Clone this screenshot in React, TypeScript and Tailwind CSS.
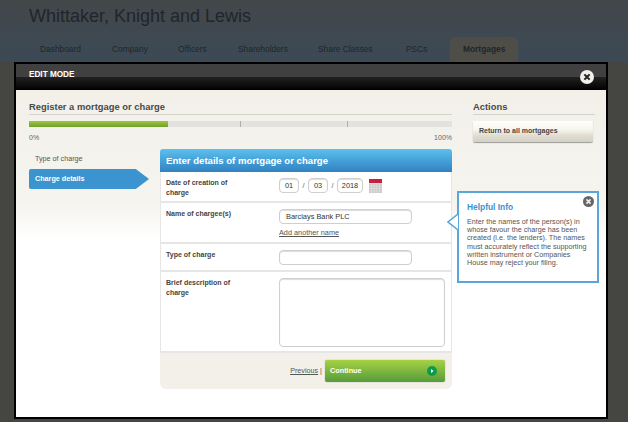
const font = "font-['Liberation_Sans',Arial,sans-serif]";

const tabs = ["Dashboard", "Company", "Officers", "Shareholders", "Share Classes", "PSCs"];

function CloseIcon({ size, bg, fg }: { size: number; bg: string; fg: string }) {
    return (
        <svg width={size} height={size} viewBox="0 0 16 16">
            <circle cx="8" cy="8" r="8" fill={bg} />
            <path d="M5 5l6 6M11 5l-6 6" stroke={fg} strokeWidth="2.4" />
        </svg>
    );
}

function CalendarIcon() {
    return (
        <svg width="13" height="14" viewBox="0 0 13 14">
            <rect width="13" height="14" fill="#c9c9c9" />
            <rect width="13" height="4" fill="#c8203c" />
            <path d="M0 4.5h13M0 7h13M0 9.5h13M0 12h13M2.6 4v10M5.2 4v10M7.8 4v10M10.4 4v10" stroke="#e4e4e4" strokeWidth="0.6" />
        </svg>
    );
}

function FieldRow({ label, className, children }: { label: string; className: string; children: React.ReactNode }) {
    return (
        <div className={`flex border-b-2 border-[#e6e6e4] pl-[5px] pt-[6px] ${className}`}>
            <div className="w-[113px] shrink-0 pr-[30px] text-[7px] leading-[10px] font-bold text-[#444]">{label}</div>
            <div>{children}</div>
        </div>
    );
}

const inputClass = "border border-[#cfcfcd] rounded-[4px] bg-white text-[7.4px] text-[#333] flex items-center shadow-[inset_0_1px_1px_#ddd]";

export default function App() {
    return (
        <div className={`relative w-[628px] h-[422px] overflow-hidden bg-[#454541] ${font}`}>
            {/* Page behind the overlay */}
            <div className="h-[62px] bg-gradient-to-b from-[#43474a] to-[#3b4a56] pl-[29px]">
                <h1 className="pt-[4px] pb-[1px] text-[18px] leading-[24px] text-[#20262a]">Whittaker, Knight and Lewis</h1>
                <div className="flex mt-[8px] ml-[-29px] pl-[28px] text-[8.4px] text-[#20262a]">
                    <span className="w-[72px] pl-[12px] pt-[6px] h-[25px]">{tabs[0]}</span>
                    <span className="w-[68px] pl-[12px] pt-[6px]">{tabs[1]}</span>
                    <span className="w-[60px] pl-[10px] pt-[6px]">{tabs[2]}</span>
                    <span className="w-[80px] pl-[10px] pt-[6px]">{tabs[3]}</span>
                    <span className="w-[84px] pl-[10px] pt-[6px]">{tabs[4]}</span>
                    <span className="w-[58px] pl-[14px] pt-[6px]">{tabs[5]}</span>
                    <span className="w-[68px] h-[25px] rounded-t-[6px] bg-[#4f4d48] pl-[13px] pt-[6px] font-bold">Mortgages</span>
                </div>
            </div>

            {/* Edit mode overlay */}
            <div className="absolute left-[14px] top-[62px] w-[594px] h-[357px] border-2 border-black flex flex-col">
                <div className="relative h-[26px] shrink-0 bg-[linear-gradient(#404040_0,#404040_50%,#222_50%,#000_100%)] pl-[13px] pt-[5px] text-[8.2px] font-bold leading-[11px] text-white">
                    EDIT MODE
                    <div className="absolute right-[12px] top-[6px] flex">
                        <CloseIcon size={14} bg="#f2f0e9" fg="#222" />
                    </div>
                </div>

                <div className="relative flex-1 flex bg-[linear-gradient(#f2f0e9_0,#f5f4ef_35%,#fff_46%)] pl-[13px] pr-[11px]">
                    <div className="w-[423px] shrink-0">
                        <h2 className="h-[25px] pt-[10px] border-b border-[#d5d3cc] text-[9.4px] leading-[14px] font-bold text-[#4a4a46]">Register a mortgage or charge</h2>
                        <div className="relative mt-[6px] h-[6px] bg-[#e3e2de]">
                            <div className="h-full w-[139px] bg-gradient-to-b from-[#9cc642] to-[#72a02c]" />
                            <div className="absolute left-[211px] top-0 h-full w-px bg-[#b0afa9]" />
                            <div className="absolute left-[318px] top-0 h-full w-px bg-[#b0afa9]" />
                        </div>
                        <div className="flex justify-between mt-[6px] text-[7px] leading-[9px] text-[#666]">
                            <span>0%</span>
                            <span>100%</span>
                        </div>

                        <div className="flex mt-[7px]">
                            <div className="w-[131px] shrink-0">
                                <div className="pl-[6px] pt-[5px] h-[20px] text-[7.2px] leading-[10px] text-[#555]">Type of charge</div>
                                <div className="h-[20px] w-[120px] rounded-l-[2px] bg-[#3b93d0] pl-[6px] pt-[5px] text-[7.2px] leading-[10px] font-bold text-white [clip-path:polygon(0_0,89%_0,100%_50%,89%_100%,0_100%)]">Charge details</div>
                            </div>

                            <div className="w-[292px] shrink-0">
                                <div className="h-[23px] rounded-t-[3px] bg-gradient-to-b from-[#5cc0ee] to-[#3182c2] pl-[6px] pt-[5px] text-[9.6px] leading-[13px] font-bold text-white">Enter details of mortgage or charge</div>
                                <div className="border-x border-[#e6e6e4] bg-white">
                                    <FieldRow label="Date of creation of charge" className="h-[31px]">
                                        <div className="flex items-center text-[7.4px] text-[#666]">
                                            <div className={`${inputClass} w-[20px] h-[15px] justify-center`}>01</div>
                                            <span className="w-[9px] text-center">/</span>
                                            <div className={`${inputClass} w-[20px] h-[15px] justify-center`}>03</div>
                                            <span className="w-[9px] text-center">/</span>
                                            <div className={`${inputClass} w-[26px] h-[15px] justify-center`}>2018</div>
                                            <div className="ml-[6px] flex">
                                                <CalendarIcon />
                                            </div>
                                        </div>
                                    </FieldRow>
                                    <FieldRow label="Name of chargee(s)" className="h-[41px]">
                                        <div className={`${inputClass} w-[133px] h-[15px] pl-[6px]`}>Barclays Bank PLC</div>
                                        <a className="block mt-[4px] text-[7.3px] leading-[10px] text-[#555] underline">Add another name</a>
                                    </FieldRow>
                                    <FieldRow label="Type of charge" className="h-[28px]">
                                        <div className={`${inputClass} w-[133px] h-[15px]`} />
                                    </FieldRow>
                                    <FieldRow label="Brief description of charge" className="h-[81px]">
                                        <div className={`${inputClass} w-[166px] h-[69px]`} />
                                    </FieldRow>
                                </div>
                                <div className="h-[36px] rounded-b-[6px] bg-[#f2f0e9] flex items-start justify-end pr-[7px] pt-[7px]">
                                    <span className="pt-[6px] text-[7.2px] leading-[10px] text-[#555]"><a className="underline">Previous</a> |</span>
                                    <div className="ml-[3px] w-[120px] h-[22px] rounded-[2px] bg-gradient-to-b from-[#a6d144] to-[#559c3a] shadow-[0_0_1px_#777] flex items-center justify-between pl-[5px] pr-[8px] text-[7.3px] font-bold text-white">
                                        Continue
                                        <svg width="10" height="10" viewBox="0 0 10 10">
                                            <circle cx="5" cy="5" r="5" fill="#0f9a4a" />
                                            <path d="M4 3l2.5 2L4 7z" fill="#fff" />
                                        </svg>
                                    </div>
                                </div>
                            </div>
                        </div>
                    </div>

                    <div className="ml-[21px] w-[122px] shrink-0">
                        <h2 className="h-[25px] pt-[10px] border-b border-[#d5d3cc] text-[9.4px] leading-[14px] font-bold text-[#4a4a46]">Actions</h2>
                        <div className="mt-[6px] w-[120px] h-[21px] rounded-[2px] bg-[linear-gradient(#fffefb_0,#f8f6f0_40%,#e0dcd1_70%,#d6d1c5_100%)] shadow-[0_1px_1px_#999] pl-[6px] pt-[5px] text-[7px] leading-[10px] font-bold text-[#444]">Return to all mortgages</div>
                    </div>

                    {/* Helpful info popover */}
                    <div className="absolute left-[441px] top-[101px] w-[142px] h-[92px] border-2 border-[#5aa5da] bg-white pl-[8px] pr-[6px] pt-[8px]">
                        <svg className="absolute left-[-12px] top-[20px]" width="11" height="18" viewBox="0 0 11 18">
                            <path d="M11 1L1 9l10 8" fill="#fff" stroke="#5aa5da" strokeWidth="1.5" />
                        </svg>
                        <div className="absolute right-[3px] top-[3px] flex">
                            <CloseIcon size={11} bg="#666" fg="#eee" />
                        </div>
                        <div className="text-[8.4px] leading-[12px] font-bold text-[#3b93d0]">Helpful Info</div>
                        <p className="mt-[5px] text-[7.2px] leading-[8.2px] text-[#555]">Enter the names of the person(s) in whose favour the charge has been created (i.e. the lenders). The names must accurately reflect the supporting written instrument or Companies House may reject your filing.</p>
                    </div>
                </div>
            </div>
        </div>
    );
}
